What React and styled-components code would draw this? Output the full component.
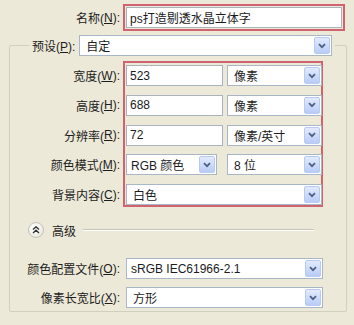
import React from "react";
import styled, { createGlobalStyle } from "styled-components";

const Global = createGlobalStyle`
  html, body { margin: 0; padding: 0; background: #ECE9D8; }
  body {
    font-family: "Liberation Sans", "Noto Sans CJK SC", sans-serif;
    font-size: 12px;
    color: #1c1c1c;
  }
  * { box-sizing: border-box; }
`;

const Page = styled.div`
  width: 354px;
  height: 325px;
  padding-top: 4px;
  overflow: hidden;
  background: #ECE9D8;
`;

const Row = styled.div`
  display: flex;
  align-items: center;
`;

const Label = styled.div`
  width: ${(p) => p.$w || 111}px;
  height: ${(p) => p.$h || 21}px;
  flex: none;
  display: flex;
  align-items: center;
  justify-content: flex-end;
  white-space: nowrap;
  padding-right: 1px;
  u { text-decoration: underline; text-underline-offset: 1px; }
`;

const RedFrame = styled.div`
  margin-left: 2px;
  border: 2px solid #CF6470;
  padding: ${(p) => p.$pad || "1px"};
  width: ${(p) => p.$w}px;
  display: flex;
  flex-direction: column;
  gap: 8.75px;
`;

const TextBox = styled.div`
  width: ${(p) => (p.$w ? p.$w + "px" : "100%")};
  height: 21px;
  flex: none;
  background: #fff;
  border: 1px solid #A9B3BE;
  display: flex;
  align-items: center;
  padding-left: 3px;
  white-space: nowrap;
  overflow: hidden;
`;

const Combo = styled.div`
  width: ${(p) => p.$w}px;
  height: 21px;
  flex: none;
  background: #fff;
  border: 1px solid #A9B6C6;
  display: flex;
  align-items: center;
  padding: 0 1px 0 ${(p) => p.$pl || 6}px;
  white-space: nowrap;
`;

const ComboText = styled.span`
  flex: 1;
  overflow: hidden;
`;

const ArrowBtn = styled.span`
  width: 16px;
  height: 17px;
  flex: none;
  border: 1px solid #B8CAF2;
  border-radius: 2px;
  background: linear-gradient(#E2EAFE, #B9CCF7);
  display: flex;
  align-items: center;
  justify-content: center;
`;

const Arrow = () => (
  <ArrowBtn>
    <svg width="8" height="6" viewBox="0 0 8 6">
      <path d="M1 1.2 L4 4.2 L7 1.2" fill="none" stroke="#4D6185" strokeWidth="1.8" />
    </svg>
  </ArrowBtn>
);

const ComboBox = ({ w, pl, children }) => (
  <Combo $w={w} $pl={pl}>
    <ComboText>{children}</ComboText>
    <Arrow />
  </Combo>
);

const Group = styled.fieldset`
  margin: 4px 0 0 9px;
  width: 338px;
  padding: 0 0 3px 0;
  border: 1px solid #D0D0BF;
  border-radius: 2px;
  min-width: 0;
`;

const Legend = styled.legend`
  margin-left: 19px;
  padding: 0 3px 0 0;
`;

const LegendInner = styled.div`
  display: flex;
  align-items: center;
  height: 21px;
`;

const LegendLabel = styled.span`
  padding: 0 4px 0 3px;
  white-space: nowrap;
  u { text-decoration: underline; text-underline-offset: 1px; }
`;

const Body = styled.div`
  display: flex;
  margin-top: 5px;
`;

const LabelCol = styled.div`
  display: flex;
  flex-direction: column;
  gap: 8.75px;
  padding-top: 4px;
`;

const CtrlRow = styled.div`
  display: flex;
  gap: ${(p) => p.$gap || 4}px;
`;

const Advanced = styled.div`
  display: flex;
  align-items: center;
  height: 16px;
  margin-top: 15px;
  padding-left: 18px;
`;

const AdvIcon = styled.span`
  width: 16px;
  height: 16px;
  border-radius: 50%;
  border: 1px solid #C4C2B8;
  background: radial-gradient(circle at 40% 35%, #FFFFFF, #E4E2DA);
  display: flex;
  align-items: center;
  justify-content: center;
  flex: none;
`;

const AdvText = styled.span`
  margin-left: 8px;
  white-space: nowrap;
`;

const AdvLine = styled.span`
  flex: 1;
  height: 2px;
  margin: 0 32px 0 7px;
  border-top: 1px solid #C6C4B5;
  border-bottom: 1px solid #FFFFFF;
`;

const Lower = styled.div`
  display: flex;
  flex-direction: column;
  gap: 8px;
  margin-top: 20px;
`;

const LowerRow = styled.div`
  display: flex;
  gap: 5px;
`;

export default function App() {
  return (
    <Page>
      <Global />
      <Row>
        <Label $w={121} $h={27}>名称(<u>N</u>):</Label>
        <RedFrame $w={222} $pad="1px">
          <TextBox>ps打造剔透水晶立体字</TextBox>
        </RedFrame>
      </Row>
      <Group>
        <Legend>
          <LegendInner>
            <LegendLabel>预设(<u>P</u>):</LegendLabel>
            <ComboBox w={253} pl={6}>自定</ComboBox>
          </LegendInner>
        </Legend>
        <Body>
          <LabelCol>
            <Label>宽度(<u>W</u>):</Label>
            <Label>高度(<u>H</u>):</Label>
            <Label>分辨率(<u>R</u>):</Label>
            <Label>颜色模式(<u>M</u>):</Label>
            <Label>背景内容(<u>C</u>):</Label>
          </LabelCol>
          <RedFrame $w={200} $pad="2px 0 0 1px">
            <CtrlRow $gap={4}>
              <TextBox $w={97}>523</TextBox>
              <ComboBox w={95}>像素</ComboBox>
            </CtrlRow>
            <CtrlRow $gap={4}>
              <TextBox $w={97}>688</TextBox>
              <ComboBox w={95}>像素</ComboBox>
            </CtrlRow>
            <CtrlRow $gap={4}>
              <TextBox $w={97}>72</TextBox>
              <ComboBox w={95}>像素/英寸</ComboBox>
            </CtrlRow>
            <CtrlRow $gap={10}>
              <ComboBox w={91} pl={4}>RGB 颜色</ComboBox>
              <ComboBox w={95}>8 位</ComboBox>
            </CtrlRow>
            <CtrlRow>
              <ComboBox w={196}>白色</ComboBox>
            </CtrlRow>
          </RedFrame>
        </Body>
        <Advanced>
          <AdvIcon>
            <svg width="8" height="8" viewBox="0 0 8 8">
              <path d="M1 3.5 L4 0.8 L7 3.5 M1 7 L4 4.3 L7 7" fill="none" stroke="#333" strokeWidth="1.4" />
            </svg>
          </AdvIcon>
          <AdvText>高级</AdvText>
          <AdvLine />
        </Advanced>
        <Lower>
          <LowerRow>
            <Label>颜色配置文件(<u>O</u>):</Label>
            <ComboBox w={197} pl={4}>sRGB IEC61966-2.1</ComboBox>
          </LowerRow>
          <LowerRow>
            <Label>像素长宽比(<u>X</u>):</Label>
            <ComboBox w={197}>方形</ComboBox>
          </LowerRow>
        </Lower>
      </Group>
    </Page>
  );
}
